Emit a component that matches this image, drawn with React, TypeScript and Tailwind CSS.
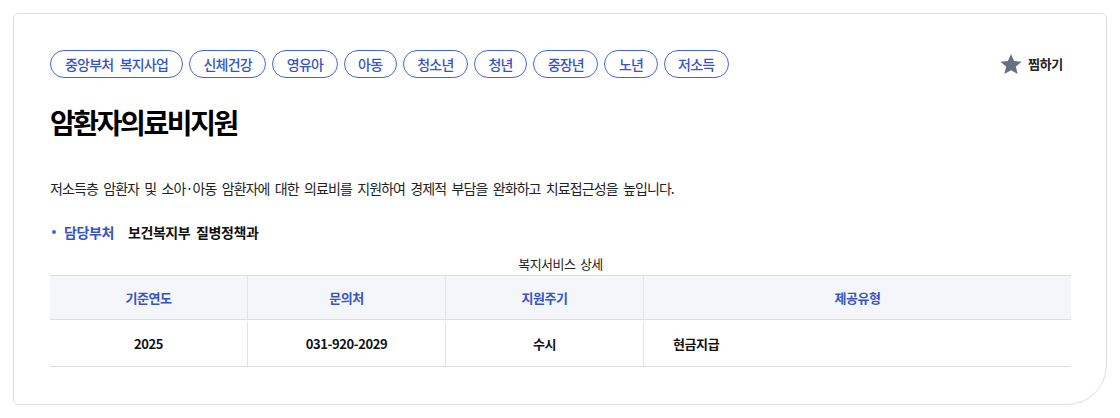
import React from "react";

const tags = ["중앙부처 복지사업", "신체건강", "영유아", "아동", "청소년", "청년", "중장년", "노년", "저소득"];

export default function App() {
  return (
    <div className="w-[1120px] h-[418px] bg-white pt-[13px] pl-[13px]" style={{ fontFamily: '"Noto Sans CJK KR", "Noto Sans", sans-serif' }}>
      <div className="w-[1094px] h-[392px] border border-[#dedede] rounded-tl-[5px] rounded-tr-[5px] rounded-bl-[5px] rounded-br-[40px] pt-[36px] pl-[36px] pr-[35px]">
        <div className="flex items-center justify-between">
          <div className="flex gap-[6px]">
            {tags.map((t, i) => (
              <span key={t} className={(i === 0 ? "px-[14px] " : "px-[13.5px] ") + "h-[28px] flex items-center border border-[#4466dd] rounded-full text-[14px] font-medium text-[#3553c8] tracking-[-0.8px] [word-spacing:4px] leading-none"}>
                {t}
              </span>
            ))}
          </div>
          <div className="flex items-center gap-[5px] mr-[8px]">
            <svg width="24" height="23" viewBox="0 0 24 24">
              <path d="M12 1l3.2 7.3 7.9.7-6 5.2 1.8 7.8L12 18l-6.9 4 1.8-7.8-6-5.2 7.9-.7z" fill="#6b6e82" />
            </svg>
            <span className="text-[13px] font-bold text-[#222] tracking-[-0.3px]">찜하기</span>
          </div>
        </div>
        <h1 className="mt-[24px] text-[28px] font-bold text-black tracking-[-2.4px] leading-[40px]">암환자의료비지원</h1>
        <p className="mt-[34px] text-[14px] text-[#222] tracking-[-0.9px] [word-spacing:3px] leading-[24px]">
          저소득층 암환자 및 소아·아동 암환자에 대한 의료비를 지원하여 경제적 부담을 완화하고 치료접근성을 높입니다.
        </p>
        <div className="mt-[21px] flex items-center text-[14px] font-bold tracking-[-0.4px] [word-spacing:3px] leading-[22px]">
          <span className="w-[4px] h-[4px] rounded-full bg-[#4466dd] ml-[2px] mr-[8px]"></span>
          <span className="text-[#3553c8]">담당부처</span>
          <span className="ml-[14px] text-[#111]">보건복지부 질병정책과</span>
        </div>
        <div className="mt-[11px] text-center text-[13px] text-[#222] tracking-[-0.5px] [word-spacing:2px] leading-[20px]">복지서비스 상세</div>
        <div className="mt-[1px] w-[1021px] border-t border-b border-[#dcdde2] text-[13px] tracking-[-0.4px]">
          <div className="grid grid-cols-[198px_198px_198px_1fr] h-[44px] bg-[#f5f6fa] border-b border-[#dcdde2] text-[#3553c8] font-semibold">
            <div className="flex items-center justify-center border-r border-[#e3e4e8]">기준연도</div>
            <div className="flex items-center justify-center border-r border-[#e3e4e8]">문의처</div>
            <div className="flex items-center justify-center border-r border-[#e3e4e8]">지원주기</div>
            <div className="flex items-center justify-center">제공유형</div>
          </div>
          <div className="grid grid-cols-[198px_198px_198px_1fr] h-[46px] text-[#111] font-bold pt-[2px]">
            <div className="flex items-center justify-center border-r border-[#e3e4e8]">2025</div>
            <div className="flex items-center justify-center border-r border-[#e3e4e8]">031-920-2029</div>
            <div className="flex items-center justify-center border-r border-[#e3e4e8]">수시</div>
            <div className="flex items-center pl-[29px]">현금지급</div>
          </div>
        </div>
      </div>
    </div>
  );
}
